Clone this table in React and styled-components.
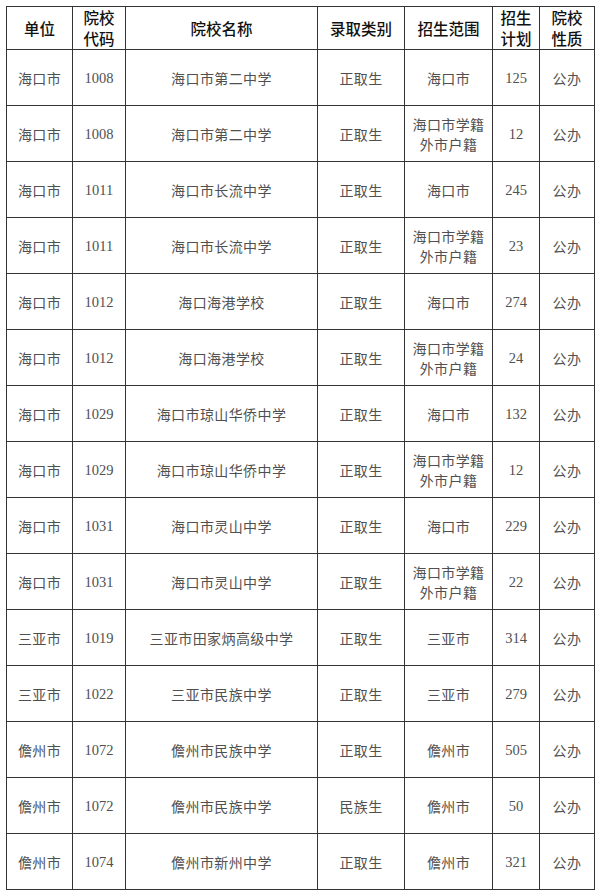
import React from 'react';
import styled, { createGlobalStyle } from 'styled-components';

const GlobalStyle = createGlobalStyle`
  html, body {
    margin: 0;
    padding: 0;
    background: #ffffff;
  }
`;

const Page = styled.div`
  width: 600px;
  height: 893px;
  padding: 6px 0 0 6px;
  box-sizing: border-box;
  background: #ffffff;
`;

const Table = styled.table`
  border-collapse: collapse;
  table-layout: fixed;
  width: 588px;
`;

const HeadCell = styled.th`
  height: 41px;
  padding: 0;
  border: 1px solid #333333;
  font-family: "Noto Sans CJK SC", sans-serif;
  font-weight: 500;
  font-size: 15.5px;
  line-height: 21px;
  color: #111111;
  text-align: center;
  vertical-align: middle;
`;

const Cell = styled.td`
  height: 55px;
  padding: 0;
  border: 1px solid #333333;
  font-family: ${(p) => (p.$num ? '"Liberation Serif", serif' : '"Noto Sans CJK SC", sans-serif')};
  font-size: ${(p) => (p.$num ? '14.5px' : '14px')};
  letter-spacing: ${(p) => (p.$num ? '0' : '0.4px')};
  line-height: 20px;
  color: #505050;
  text-align: center;
  vertical-align: middle;
`;

const widths = [66, 53, 192, 87, 88, 47, 55];

const heads = [
  ['单位'],
  ['院校', '代码'],
  ['院校名称'],
  ['录取类别'],
  ['招生范围'],
  ['招生', '计划'],
  ['院校', '性质'],
];

const wide = ['海口市学籍', '外市户籍'];

const rows = [
  ['海口市', '1008', '海口市第二中学', '正取生', ['海口市'], '125'],
  ['海口市', '1008', '海口市第二中学', '正取生', wide, '12'],
  ['海口市', '1011', '海口市长流中学', '正取生', ['海口市'], '245'],
  ['海口市', '1011', '海口市长流中学', '正取生', wide, '23'],
  ['海口市', '1012', '海口海港学校', '正取生', ['海口市'], '274'],
  ['海口市', '1012', '海口海港学校', '正取生', wide, '24'],
  ['海口市', '1029', '海口市琼山华侨中学', '正取生', ['海口市'], '132'],
  ['海口市', '1029', '海口市琼山华侨中学', '正取生', wide, '12'],
  ['海口市', '1031', '海口市灵山中学', '正取生', ['海口市'], '229'],
  ['海口市', '1031', '海口市灵山中学', '正取生', wide, '22'],
  ['三亚市', '1019', '三亚市田家炳高级中学', '正取生', ['三亚市'], '314'],
  ['三亚市', '1022', '三亚市民族中学', '正取生', ['三亚市'], '279'],
  ['儋州市', '1072', '儋州市民族中学', '正取生', ['儋州市'], '505'],
  ['儋州市', '1072', '儋州市民族中学', '民族生', ['儋州市'], '50'],
  ['儋州市', '1074', '儋州市新州中学', '正取生', ['儋州市'], '321'],
];

function Lines({ parts }) {
  return parts.map((t, i) => (
    <React.Fragment key={i}>
      {i > 0 && <br />}
      {t}
    </React.Fragment>
  ));
}

export default function App() {
  return (
    <Page>
      <GlobalStyle />
      <Table>
        <colgroup>
          {widths.map((w, i) => (
            <col key={i} style={{ width: w }} />
          ))}
        </colgroup>
        <thead>
          <tr>
            {heads.map((h, i) => (
              <HeadCell key={i}>
                <Lines parts={h} />
              </HeadCell>
            ))}
          </tr>
        </thead>
        <tbody>
          {rows.map((r, i) => (
            <tr key={i}>
              <Cell>{r[0]}</Cell>
              <Cell $num>{r[1]}</Cell>
              <Cell>{r[2]}</Cell>
              <Cell>{r[3]}</Cell>
              <Cell>
                <Lines parts={r[4]} />
              </Cell>
              <Cell $num>{r[5]}</Cell>
              <Cell>公办</Cell>
            </tr>
          ))}
        </tbody>
      </Table>
    </Page>
  );
}
